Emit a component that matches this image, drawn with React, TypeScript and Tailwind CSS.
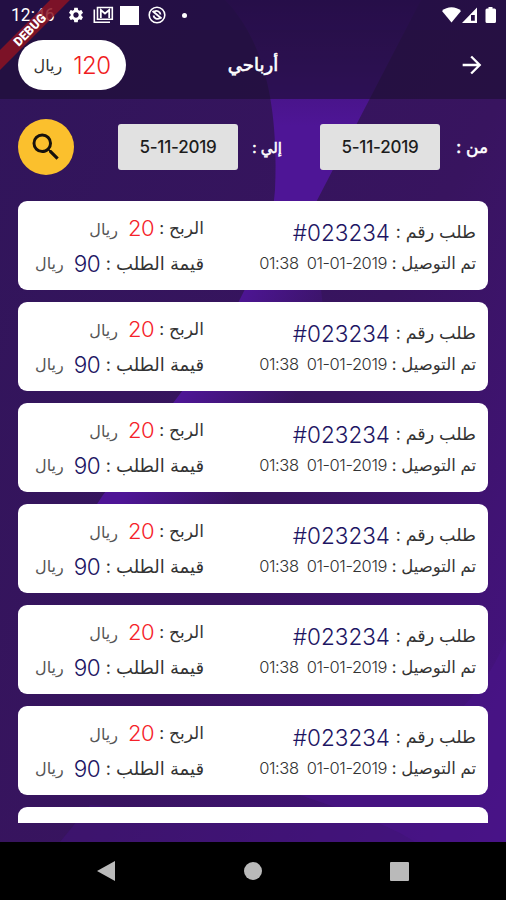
import { MdArrowForward, MdSearch, MdSettings } from 'react-icons/md'

const ORDERS = Array.from({ length: 6 }, (_, i) => ({
  id: i,
  number: '#023234',
  date: '01-01-2019',
  time: '01:38',
  profit: '20',
  total: '90',
}))

type Order = (typeof ORDERS)[number]

export default function App() {
  return (
    <div
      dir="rtl"
      className="relative isolate flex h-[900px] w-[506px] flex-col overflow-hidden bg-[#36165f] font-['Inter','DejaVu_Sans',sans-serif]"
    >
      <Backdrop />
      <StatusBar />
      <Header />
      <Filters />
      <main className="mx-[18px] flex h-[622px] flex-col gap-[12px] overflow-hidden">
        {ORDERS.map((order) => (
          <OrderCard key={order.id} order={order} />
        ))}
        {/* next card peeking in at the fold */}
        <div className="h-[89px] shrink-0 rounded-[9px] bg-white" />
      </main>
      <NavBar />
      <DebugRibbon />
    </div>
  )
}

function Backdrop() {
  return (
    <svg className="absolute inset-0 -z-10" width="506" height="900" viewBox="0 0 506 900">
      <defs>
        <linearGradient id="base" x1="0" y1="0" x2="1" y2="1">
          <stop offset="0" stopColor="#30155a" />
          <stop offset="0.55" stopColor="#38145f" />
          <stop offset="1" stopColor="#481288" />
        </linearGradient>
        <linearGradient id="beam" x1="0" y1="0" x2="0" y2="1">
          <stop offset="0" stopColor="#391366" />
          <stop offset="0.6" stopColor="#4e1596" />
          <stop offset="1" stopColor="#4e1596" />
        </linearGradient>
        <linearGradient id="tail" gradientUnits="userSpaceOnUse" x1="210" y1="340" x2="300" y2="390">
          <stop offset="0" stopColor="#4e1596" />
          <stop offset="1" stopColor="#4e1596" stopOpacity="0" />
        </linearGradient>
      </defs>
      <rect width="506" height="900" fill="url(#base)" />
      <path d="M225 0C262 38 279 100 275 190L273 210H312L421 0Z" fill="url(#beam)" />
      <path d="M273 210C262 262 235 318 183 390L103 495L70 545H350L312 210Z" fill="url(#tail)" />
      <path d="M60 842L90 805L380 820L420 842Z" fill="#42147c" opacity="0.5" />
      <path d="M300 795C350 812 390 825 415 842H506V640C480 700 430 760 300 795Z" fill="#491489" opacity="0.6" />
    </svg>
  )
}

function StatusBar() {
  return (
    <div dir="ltr" className="flex h-[30px] shrink-0 items-center bg-[#1b0c35]/60 pl-[11px] pr-[8px] text-white">
      <span className="w-[56px] pt-[2px] font-['Roboto',sans-serif] text-[17.5px] leading-none">12:46</span>
      <MdSettings size={18} />
      <svg className="ml-[8px]" width="21" height="18" viewBox="0 0 21 18" fill="none" stroke="currentColor">
        <path d="M1.300 3.500V16.300H17" strokeWidth="1.6" />
        <path d="M4.500 1.500H19.300V13.300H4.500Z" strokeWidth="1.6" />
        <path d="M7.800 12V4L12 7.500L16.200 4V12" strokeWidth="1.8" />
      </svg>
      <span className="ml-[6px] size-[19px] bg-white" />
      <svg className="ml-[9px]" width="18" height="18" viewBox="0 0 18 18" fill="none" stroke="currentColor">
        <circle cx="9" cy="9" r="7.800" strokeWidth="1.6" />
        <path d="M5.500 9.500A4 4 0 0 0 12 12M12.500 8.500A4 4 0 0 0 6 5.800" strokeWidth="1.8" />
        <path d="M4.500 5L13.500 12.500" strokeWidth="1.9" />
      </svg>
      <span className="ml-[16px] size-[5px] rounded-full bg-white" />
      <svg className="ml-auto" width="57" height="20" viewBox="0 0 57 20" fill="currentColor">
        <path d="M1 6C6 1 15 1 20 6L10.500 17.500Z" />
        <path d="M36 2.500V18H21ZM33.800 10H30V15.800H33.800Z" fillRule="evenodd" />
        <path d="M47.500 3.500V2H51.500V3.500H53.500Q55 3.500 55 5V16.500Q55 18 53.500 18H46Q44.500 18 44.500 16.500V5Q44.500 3.500 46 3.500Z" />
      </svg>
    </div>
  )
}

function Header() {
  return (
    <header className="grid h-[69px] shrink-0 grid-cols-[1fr_auto_1fr] items-center bg-[#1b0e30]/60 px-[18px] text-white">
      <MdArrowForward size={28} className="mr-[2px]" />
      <h1 className="text-[18px] leading-none [-webkit-text-stroke:0.6px_white]">أرباحي</h1>
      <div className="flex h-[50px] w-[108px] items-center justify-center gap-[11px] justify-self-end rounded-full bg-white">
        <span className="pt-[2px] text-[24px] font-light leading-none tracking-tight text-[#f01c22]">120</span>
        <span className="text-[16px] leading-none text-[#333]">ريال</span>
      </div>
    </header>
  )
}

function Filters() {
  return (
    <section className="flex h-[102px] shrink-0 items-center px-[18px] pb-[6px] text-[16px] text-white">
      <span className="w-[48px] whitespace-nowrap pt-[2px] text-[17px] [-webkit-text-stroke:0.5px_white]">من :</span>
      <DateBox value="5-11-2019" />
      <span className="mr-[38px] w-[44px] whitespace-nowrap pt-[2px] text-[15px] [-webkit-text-stroke:0.5px_white]">إلي :</span>
      <DateBox value="5-11-2019" />
      <button className="mr-auto flex size-[56px] items-center justify-center rounded-full bg-[#fbc02d] text-[#17120c]">
        <MdSearch size={36} />
      </button>
    </section>
  )
}

function DateBox({ value }: { value: string }) {
  return (
    <div dir="ltr" className="flex h-[46px] w-[120px] items-center justify-center rounded-[3px] bg-[#e1e1e1] pt-[2px] text-[17px] font-medium tracking-[-0.2px] text-[#1c1c1c]">
      {value}
    </div>
  )
}

function OrderCard({ order }: { order: Order }) {
  return (
    <article className="flex h-[89px] shrink-0 justify-between whitespace-nowrap rounded-[9px] bg-white pl-[17px] pr-[12px] pt-[13px] text-[16px] text-[#333]">
      <div className="pt-[2px]">
        <div className="flex h-[32px] items-center gap-[5px]">
          <span className="w-[81px] text-[17.5px]">طلب رقم :</span>
          <span dir="ltr" className="pt-[1px] text-[22.5px] font-light text-[#1d1563]">{order.number}</span>
        </div>
        <div className="flex h-[30px] items-center gap-[5px]">
          <span className="w-[84px] text-[16.5px]">تم التوصيل :</span>
          <span className="text-[16.5px] font-light tracking-tight">{order.date}</span>
          <span className="mr-[3px] text-[16.5px] font-light tracking-tight">{order.time}</span>
        </div>
      </div>
      <div className="w-[169px]">
        <div className="flex h-[29px] items-center gap-[5px]">
          <span className="w-[45px] text-[17px]">الربح :</span>
          <span className="text-[22px] font-light tracking-tight text-[#f5222a]">{order.profit}</span>
          <span className="mr-[5px] text-[#555]">ريال</span>
        </div>
        <div className="flex h-[40px] items-center gap-[5px]">
          <span className="w-[99px] text-[18px]">قيمة الطلب :</span>
          <span className="pt-[1px] text-[22.5px] font-light tracking-tight text-[#1d1563]">{order.total}</span>
          <span className="mr-[5px] text-[#555]">ريال</span>
        </div>
      </div>
    </article>
  )
}

function NavBar() {
  return (
    <nav dir="ltr" className="mt-auto flex h-[58px] shrink-0 items-center justify-between bg-black pl-[96px] pr-[97px]">
      <svg width="20" height="22" viewBox="0 0 20 22" fill="#bababa">
        <path d="M1 11L19 1V21Z" />
      </svg>
      <span className="size-[18px] rounded-full bg-[#bababa]" />
      <span className="size-[19px] rounded-[1px] bg-[#bababa]" />
    </nav>
  )
}

function DebugRibbon() {
  return (
    <div className="absolute left-[-50px] top-[23px] flex h-[14px] w-[160px] -rotate-45 items-center justify-center bg-[#8c1323]/85 font-['Roboto',sans-serif] text-[12.5px] font-black leading-none text-white">
      DEBUG
    </div>
  )
}
